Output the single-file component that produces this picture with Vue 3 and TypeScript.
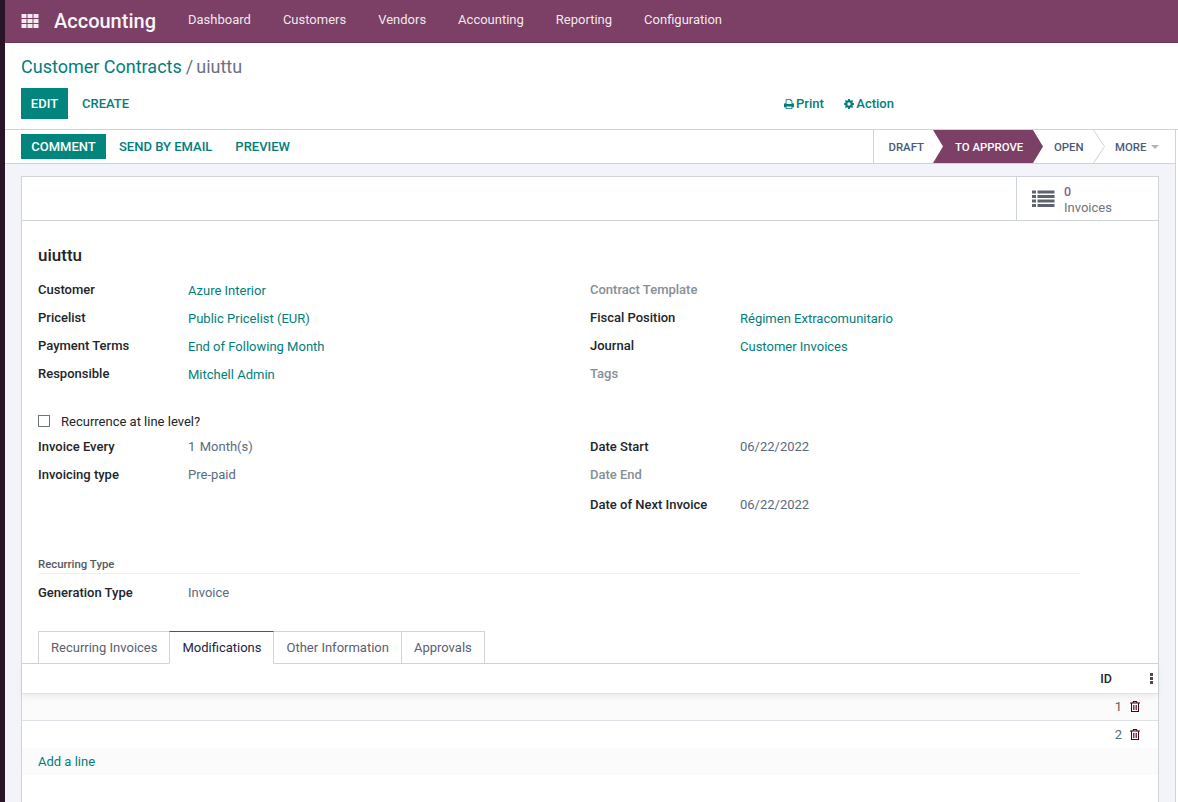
<script setup lang="ts">
const menus: string[] = ['Dashboard', 'Customers', 'Vendors', 'Accounting', 'Reporting', 'Configuration']
const tabs: string[] = ['Recurring Invoices', 'Modifications', 'Other Information', 'Approvals']
type Field = { label: string; value?: string; muted?: boolean; link?: boolean }
const leftTop: Field[] = [
  { label: 'Customer', value: 'Azure Interior', link: true },
  { label: 'Pricelist', value: 'Public Pricelist (EUR)', link: true },
  { label: 'Payment Terms', value: 'End of Following Month', link: true },
  { label: 'Responsible', value: 'Mitchell Admin', link: true },
]
const rightTop: Field[] = [
  { label: 'Contract Template', muted: true },
  { label: 'Fiscal Position', value: 'Régimen Extracomunitario', link: true },
  { label: 'Journal', value: 'Customer Invoices', link: true },
  { label: 'Tags', muted: true },
]
</script>

<template>
  <div class="page">
    <div class="strip"></div>
    <div class="main">
      <header class="navbar">
        <svg class="apps" width="18" height="14" viewBox="0 0 18 14" aria-hidden="true">
          <g fill="#fff" fill-opacity=".9">
            <rect x="0.5" y="0" width="5" height="4" /><rect x="6.5" y="0" width="5" height="4" /><rect x="12.5" y="0" width="5" height="4" />
            <rect x="0.5" y="5" width="5" height="4" /><rect x="6.5" y="5" width="5" height="4" /><rect x="12.5" y="5" width="5" height="4" />
            <rect x="0.5" y="10" width="5" height="4" /><rect x="6.5" y="10" width="5" height="4" /><rect x="12.5" y="10" width="5" height="4" />
          </g>
        </svg>
        <span class="brand">Accounting</span>
        <nav class="menu">
          <a v-for="m in menus" :key="m">{{ m }}</a>
        </nav>
      </header>

      <section class="control">
        <div class="crumbs"><a>Customer Contracts</a><span class="sep">/</span><span class="cur">uiuttu</span></div>
        <div class="ctl-row">
          <div class="ctl-left">
            <button class="btn primary edit">EDIT</button>
            <button class="btn link create">CREATE</button>
          </div>
          <div class="ctl-side">
            <a class="side-btn">
              <svg width="10" height="10" viewBox="0 0 12 12" aria-hidden="true">
                <path fill="#017e7c" d="M3 0h5l2 2v3h1a1 1 0 0 1 1 1v4H10v2H2v-2H0V6a1 1 0 0 1 1-1h1V1a1 1 0 0 1 1-1zm0 1v5h6V2.500H7.500V1zM3 9v2h6V9z" fill-rule="evenodd" />
              </svg>
              Print
            </a>
            <a class="side-btn">
              <svg width="10" height="10" viewBox="0 0 12 12" aria-hidden="true">
                <path fill="#017e7c" fill-rule="evenodd" d="M5 0h2l.3 1.600 1.100.5L9.800 1.200l1.100 1.100-.9 1.400.5 1.100 1.500.3v1.800l-1.500.3-.5 1.100.9 1.400-1.100 1.100-1.400-.9-1.100.5L7 12H5l-.3-1.600-1.100-.5-1.400.9-1.100-1.100.9-1.400-.5-1.100L0 6.900V5.100l1.500-.3.500-1.100-.9-1.400 1.100-1.100 1.400.9 1.100-.5zM6 4a2 2 0 1 0 0 4 2 2 0 0 0 0-4z" />
              </svg>
              Action
            </a>
          </div>
        </div>
      </section>

      <div class="lower">
        <section class="statusbar">
          <div class="st-left">
            <button class="btn primary comment">COMMENT</button>
            <button class="btn link">SEND BY EMAIL</button>
            <button class="btn link">PREVIEW</button>
          </div>
          <div class="steps">
            <span class="step draft">DRAFT</span>
            <span class="step active">TO APPROVE</span>
            <span class="step open">OPEN</span>
            <svg class="chev" width="13" height="33" viewBox="0 0 13 33" aria-hidden="true">
              <path d="M0.500 0 L11.500 16.500 L0.500 33" fill="none" stroke="#ced4da" />
            </svg>
            <span class="step more">MORE<i class="caret"></i></span>
          </div>
        </section>

        <div class="content">
          <div class="sheet">
            <div class="buttonbox">
              <div class="stat">
                <svg width="23" height="18" viewBox="0 0 23 18" aria-hidden="true">
                  <g fill="#5f636f">
                    <rect x="0" y="0.500" width="4" height="3" /><rect x="5.500" y="0.500" width="17" height="3" />
                    <rect x="0" y="5" width="4" height="3" /><rect x="5.500" y="5" width="17" height="3" />
                    <rect x="0" y="9.500" width="4" height="3" /><rect x="5.500" y="9.500" width="17" height="3" />
                    <rect x="0" y="14" width="4" height="3" /><rect x="5.500" y="14" width="17" height="3" />
                  </g>
                </svg>
                <div class="stat-text"><span class="num">0</span><span class="lab">Invoices</span></div>
              </div>
            </div>

            <div class="body">
              <h1 class="title">uiuttu</h1>

              <div class="cols top">
                <div class="fields">
                  <div v-for="f in leftTop" :key="f.label" class="f">
                    <label :class="{ muted: f.muted }">{{ f.label }}</label>
                    <span :class="{ lnk: f.link }">{{ f.value }}</span>
                  </div>
                </div>
                <div class="fields">
                  <div v-for="f in rightTop" :key="f.label" class="f">
                    <label :class="{ muted: f.muted }">{{ f.label }}</label>
                    <span :class="{ lnk: f.link }">{{ f.value }}</span>
                  </div>
                </div>
              </div>

              <div class="check"><i class="box"></i><span>Recurrence at line level?</span></div>

              <div class="cols second">
                <div class="fields">
                  <div class="f f2"><label>Invoice Every</label><span class="val every">1&nbsp; Month(s)</span></div>
                  <div class="f f2"><label>Invoicing type</label><span class="val">Pre-paid</span></div>
                </div>
                <div class="fields">
                  <div class="f f2"><label>Date Start</label><span class="val">06/22/2022</span></div>
                  <div class="f f2"><label class="muted">Date End</label><span></span></div>
                  <div class="f f2 f3"><label>Date of Next Invoice</label><span class="val">06/22/2022</span></div>
                </div>
              </div>

              <div class="sep-title">Recurring Type</div>
              <div class="f f2 gen"><label>Generation Type</label><span class="val">Invoice</span></div>

              <div class="tabs">
                <a v-for="t in tabs" :key="t" class="tab" :class="{ on: t === 'Modifications' }">{{ t }}</a>
              </div>
            </div>

            <div class="table">
              <div class="thead"><span class="th">ID</span><i class="dots"><b></b><b></b><b></b></i></div>
              <div class="tr odd">
                <span class="id">1</span>
                <svg class="trash" width="10" height="11" viewBox="0 0 10 11" aria-hidden="true"><path fill="#3a0a14" d="M3.200 0h3.600l.8 1.500H10v1H9V11H1V2.500H0v-1h2.400zm.4 1.500h2.800l-.3-.6H3.900zM2 2.500V10h6V2.500z" fill-rule="evenodd"/><path stroke="#a02a4a" stroke-width="1" d="M3.500 4v5M5 4v5M6.500 4v5"/></svg>
              </div>
              <div class="tr even">
                <span class="id">2</span>
                <svg class="trash" width="10" height="11" viewBox="0 0 10 11" aria-hidden="true"><path fill="#3a0a14" d="M3.200 0h3.600l.8 1.500H10v1H9V11H1V2.500H0v-1h2.400zm.4 1.500h2.800l-.3-.6H3.900zM2 2.500V10h6V2.500z" fill-rule="evenodd"/><path stroke="#a02a4a" stroke-width="1" d="M3.500 4v5M5 4v5M6.500 4v5"/></svg>
              </div>
              <div class="add"><a>Add a line</a></div>
            </div>
          </div>
        </div>
      </div>
    </div>
  </div>
</template>

<style>
html, body { margin: 0; height: 100%; overflow: hidden; background: #fff; }
</style>

<style scoped>
* { box-sizing: border-box; }
.page { display: flex; height: 802px; width: 1178px; overflow: hidden; font-family: Roboto, "Noto Sans", sans-serif; font-size: 13px; color: #4c4c4c; }
.strip { width: 5px; background: #2a1528; flex: none; }
.main { flex: 1; min-width: 0; display: flex; flex-direction: column; }

.navbar { height: 43px; flex: none; background: #7c3f66; border-bottom: 1px solid #6b3658; display: flex; align-items: center; color: #fff; padding: 0 0 1px 16px; }
.apps { flex: none; margin-right: 15px; }
.brand { font-size: 20px; font-weight: 500; width: 134px; flex: none; opacity: .95; }
.menu { display: flex; gap: 32px; margin-bottom: 2px; }
.menu a { font-size: 13px; color: rgba(255,255,255,.9); }

.control { height: 87px; flex: none; background: #fff; border-bottom: 1px solid #ced4da; padding: 12px 16px 0; }
.crumbs { font-size: 18px; line-height: 24px; height: 33px; }
.crumbs a { color: #017e7c; }
.sep { color: #6c757d; margin: 0 3px 0 4px; }
.cur { color: #6f6f80; }
.ctl-row { display: flex; }
.ctl-left { display: flex; width: 763px; }
.btn { font: 500 13px/1 Roboto, sans-serif; border: 0; background: none; padding: 0; margin: 0; }
.primary { background: #01857d; color: #fff; }
.link { color: #017e7c; }
.edit { width: 47px; height: 31px; }
.create { margin-left: 14px; }
.ctl-side { display: flex; gap: 20.500px; align-items: center; height: 31px; }
.side-btn { color: #017e7c; font-weight: 500; font-size: 13px; display: flex; align-items: center; gap: 2px; }

.lower { flex: 1; min-height: 0; display: flex; flex-direction: column; margin-right: 2px; border-right: 1px solid #ced4da; }
.statusbar { height: 34px; flex: none; background: #fff; border-bottom: 1px solid #ced4da; display: flex; justify-content: space-between; padding-left: 16px; }
.st-left { display: flex; align-items: center; gap: 23px; }
.comment { width: 85px; height: 25px; margin-right: -10px; }
.steps { display: flex; align-items: stretch; height: 33px; border-left: 1px solid #ced4da; font-weight: 500; font-size: 11.400px; color: #4a5a78; }
.step { display: flex; align-items: center; }
.draft { padding-left: 14.500px; width: 59px; }
.active { width: 110px; background: #7c3f66; color: #fff; padding-left: 22px; clip-path: polygon(0 0, 100px 0, 100% 50%, 100px 100%, 0 100%, 10px 50%); }
.open { padding-left: 11px; width: 50px; }
.chev { flex: none; height: 33px; }
.more { padding-left: 9px; width: 69px; }
.caret { display: inline-block; width: 0; height: 0; border-left: 4px solid transparent; border-right: 4px solid transparent; border-top: 4px solid #adb5bd; margin-left: 5px; }

.content { flex: 1; background: #f3f4f9; padding: 12px 16px 0 16px; min-height: 0; overflow: hidden; }
.sheet { background: #fff; border: 1px solid #ced4da; height: 700px; }
.buttonbox { height: 44px; border-bottom: 1px solid #ced4da; display: flex; justify-content: flex-end; }
.stat { width: 142px; border-left: 1px solid #ced4da; display: flex; align-items: center; padding-left: 15px; gap: 9px; }
.stat-text { display: flex; flex-direction: column; line-height: 16px; font-size: 13px; margin-top: 2px; }
.num { color: #8c5f7f; font-weight: 500; font-size: 12.500px; }
.lab { color: #6c757d; }

.body { padding: 0 16px; }
.title { margin: 0; font-size: 17px; font-weight: 500; color: #212529; line-height: 20px; padding-top: 24px; height: 58px; }
.cols { display: grid; grid-template-columns: 552px 1fr; }
.top { height: 112px; }
.f { display: grid; grid-template-columns: 150px 1fr; height: 28px; line-height: 28px; align-items: start; }
.f label { font-weight: 500; color: #212529; line-height: 20px; padding-top: 1px; }
.f label.muted { color: #868e96; }
.f span { line-height: 20px; padding-top: 2px; }
.lnk { color: #017e7c; }
.val { color: #5a6a80; }
.every { word-spacing: -1px; }
.check { display: flex; align-items: center; margin-top: 20px; height: 20px; gap: 11px; color: #212529; }
.box { width: 12px; height: 12px; border: 1px solid #6c757d; flex: none; display: block; }
.second { height: 120px; margin-top: 6px; }
.second .f2 label, .second .f2 span { padding-top: 0; }
.f3 { height: 30px; padding-top: 2px; }
.sep-title { font-size: 11.400px; font-weight: 500; color: #55595f; border-bottom: 1px solid #eef0f3; height: 16px; line-height: 12px; width: 1042px; margin-top: 1px; }
.gen { margin-top: 9px; }
.gen label, .gen span { padding-top: 0; }
.tabs { display: flex; margin-top: 20px; height: 33px; position: relative; z-index: 1; }
.tab { display: flex; align-items: center; padding: 0 12px; border: 1px solid #ced4da; border-left-width: 0; color: #5a6070; background: #fff; }
.tab:first-child { border-left-width: 1px; }
.tab.on { color: #212544; border-top-color: #7c3f66; border-left: 1px solid #ced4da; margin-left: -1px; border-bottom-color: #fff; padding-right: 11px; }
.tab.on + .tab { padding-left: 13px; }

.table { border-top: 1px solid #ced4da; margin-top: -1px; }
.thead { height: 30px; display: flex; justify-content: flex-end; align-items: center; border-bottom: 1px solid #dee2e6; box-shadow: 0 3px 6px rgba(0,0,0,.06); position: relative; padding-right: 5px; }
.th { font-weight: 500; color: #212529; margin-right: 38px; font-size: 12.500px; }
.dots { display: flex; flex-direction: column; gap: 1.500px; }
.dots b { display: block; width: 3px; height: 2.500px; background: #4f4456; }
.tr { display: flex; justify-content: flex-end; align-items: center; padding-right: 18px; gap: 8px; }
.tr.even { height: 27px; padding-bottom: 1px; }
.tr.odd { height: 27px; background: #fbfbfb; border-bottom: 1px solid #dee2e6; padding-bottom: 2px; }
.id { color: #5a6a80; font-size: 13px; }
.tr.odd .id { color: #6b5a66; }
.trash { flex: none; }
.add { height: 27px; background: #fbfbfb; padding-left: 16px; display: flex; align-items: center; }
.add a { color: #017e7c; }
</style>
